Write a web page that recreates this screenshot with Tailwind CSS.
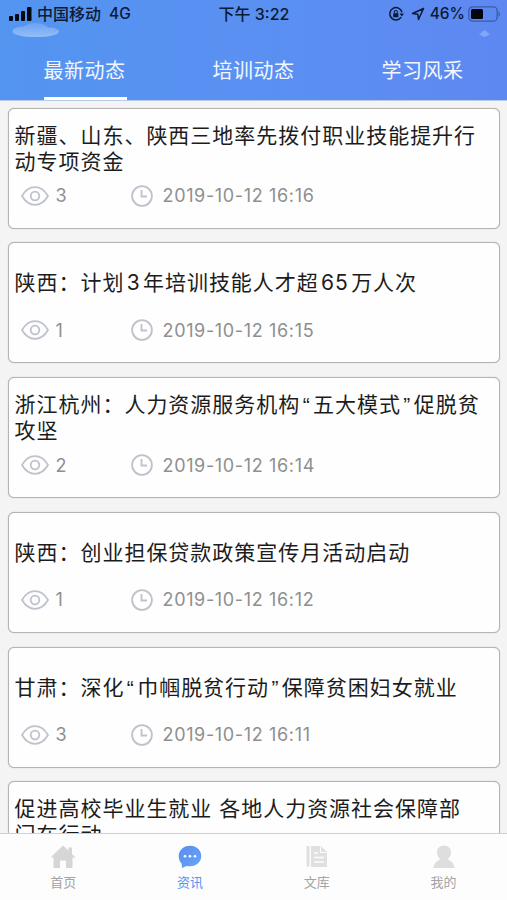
<!DOCTYPE html>
<html lang="zh-CN">
  <head>
    <meta charset="UTF-8" />
    <meta name="viewport" content="width=device-width, initial-scale=1" />
    <title>最新动态</title>
    <script src="https://cdn.jsdelivr.net/npm/@tailwindcss/browser@4"></script>
  </head>
  <body
    class="h-[900px] w-[507px] flex flex-col overflow-hidden bg-[#f4f4f4] font-['Inter','Noto_Sans_CJK_SC',sans-serif]"
  >
    <header
      class="relative h-[100px] shrink-0 flex flex-col bg-linear-to-r from-[#5395f0] via-[#5a90f2] to-[#5e88f1]"
    >
      <!-- Clouds -->
      <svg class="absolute left-3 top-[22px]" width="48" height="16" viewBox="0 0 48 16">
        <defs>
          <linearGradient id="cloud" x1="0" y1="0" x2="0" y2="1">
            <stop offset="0" stop-color="#6ca2f4" />
            <stop offset="1" stop-color="#94bdf7" />
          </linearGradient>
        </defs>
        <path d="M12 4.500C15 1.500 22 0 27 1.500c4 .5 7 2 9 4 6 0 11 1.500 11 4 0 3.500-10 5.500-23 5.500S.5 13 .5 9.500C.5 6.500 5 4.500 12 4.500Z" fill="url(#cloud)" />
      </svg>
      <svg class="absolute left-[478px] top-[30px]" width="13" height="8" viewBox="0 0 13 8">
        <path d="M0 4c2 0 3-1 4-2 1-2 4-2 5 0 1 1 2 2 4 2-2 0-3 2-6.500 3C3 6 2 4 0 4Z" fill="#80a8f7" />
      </svg>

      <!-- Status bar -->
      <div class="relative h-7 grid grid-cols-3 items-center pl-[9px] pr-[6px] text-[#0c1a35] text-[16px] leading-7">
        <div class="flex items-center whitespace-nowrap">
          <svg class="mr-[5px]" width="23" height="14" viewBox="0 0 23 14" fill="#030912">
            <rect x="0" y="9" width="4" height="5" rx="1" />
            <rect x="6" y="7" width="4" height="7" rx="1" />
            <rect x="12" y="4" width="4" height="10" rx="1" />
            <rect x="18" y="0" width="4.500" height="14" rx="1" />
          </svg>
          <span class="font-medium">中国移动</span>
          <span class="ml-[8px] font-medium text-[15.500px]">4G</span>
        </div>
        <div class="pr-[2px] text-center font-medium whitespace-nowrap">下午 3:22</div>
        <div class="flex items-center justify-end">
          <svg class="mr-[7px]" width="16" height="16" viewBox="0 0 16 16" fill="none" stroke="#0c1a35" stroke-width="1.500">
            <path d="M13.200 11.200A6.200 6.200 0 1 1 14 6.200" />
            <path d="M11.600 7.600h4.400l-2.200 3Z" fill="#0c1a35" stroke="none" />
            <rect x="5.200" y="7.300" width="5.200" height="4" rx=".6" fill="#0c1a35" stroke="none" />
            <path d="M6.300 7.500V6a1.500 1.500 0 0 1 3 0v1.500" stroke-width="1.100" />
          </svg>
          <svg class="mr-[5px]" width="14" height="14" viewBox="0 0 14 14" fill="none" stroke="#0c1a35" stroke-width="1.500" stroke-linejoin="round">
            <path d="M12.500 1.500 1.500 6.500l5.300.7.700 5.300Z" />
          </svg>
          <span class="mr-[3px] font-medium text-[15.500px]">46%</span>
          <svg width="33" height="16" viewBox="0 0 33 16">
            <rect x=".8" y=".8" width="28.400" height="14.400" rx="4" fill="none" stroke="#3a5ca3" stroke-width="1.300" />
            <rect x="3" y="3" width="12" height="10" rx="1.500" fill="#02060c" />
            <path d="M30.500 5.500c2 1 2 4 0 5Z" fill="#3a5ca3" />
          </svg>
        </div>
      </div>

      <!-- Top tabs -->
      <nav class="flex-1 grid grid-cols-3 text-center text-[20px] tracking-[0.500px] text-[#f2f7ff]">
        <a class="flex flex-col items-center">
          <span class="h-[69px] leading-[86px]">最新动态</span>
          <span class="ml-[2px] h-[3px] w-[83px] bg-white"></span>
        </a>
        <a class="leading-[86px]">培训动态</a>
        <a class="leading-[86px]">学习风采</a>
      </nav>
    </header>

    <!-- News list -->
    <main id="newsList" class="flex-1 min-h-0 overflow-hidden flex flex-col gap-[13.800px] border-t border-[#b9c9ea] pt-[6.500px] px-[7.500px]"></main>

    <!-- Bottom tabs -->
    <footer class="h-[67px] shrink-0 grid grid-cols-4 border-t border-[#cfcfcf] bg-[#fdfdfd] text-[13px] text-[#a3a3a3]">
      <a class="flex flex-col items-center pt-[11px]">
        <svg width="26" height="24" viewBox="0 0 26 24" fill="#d6d6d6">
          <path d="M13 .5 18.500 5.500V2.500h3.500v6.500l3.500 3.500H22.500V22a1 1 0 0 1-1 1H16v-6.500a1 1 0 0 0-1-1h-4a1 1 0 0 0-1 1V23H4.500a1 1 0 0 1-1-1v-9.500H.5Z" />
        </svg>
        <span class="mt-[3px] leading-[20px]">首页</span>
      </a>
      <a class="flex flex-col items-center pt-[11px] text-[#5793ef]">
        <svg width="26" height="24" viewBox="0 0 26 24">
          <defs>
            <linearGradient id="bubble" x1="0" y1="0" x2="1" y2="1">
              <stop offset="0" stop-color="#5c8cf0" />
              <stop offset="1" stop-color="#66a6f6" />
            </linearGradient>
          </defs>
          <path d="M13 .7c6.500 0 11.300 4.500 11.300 10.300S19.500 21.300 13 21.300c-1.200 0-2.400-.1-3.500-.4L5 23l-.3-4.200C2.800 16.900 1.700 14.100 1.700 11 1.700 5.200 6.500.7 13 .7Z" fill="url(#bubble)" />
          <g fill="#fff">
            <circle cx="8" cy="11.300" r="1.300" />
            <circle cx="13" cy="11.300" r="1.300" />
            <circle cx="18" cy="11.300" r="1.300" />
          </g>
        </svg>
        <span class="mt-[3px] leading-[20px]">资讯</span>
      </a>
      <a class="flex flex-col items-center pt-[11px]">
        <svg width="26" height="24" viewBox="0 0 26 24">
          <rect x="2.500" y="1" width="3" height="20.500" fill="#e0e0e0" />
          <path d="M7 1h10l6 6v15H7Z" fill="#e0e0e0" />
          <path d="M16.500 1.500V7.500H22.500" fill="none" stroke="#fdfdfd" stroke-width="1.200" />
          <path d="M10 8h4M10 12.500h10M10 17h10" stroke="#fdfdfd" stroke-width="1.300" />
        </svg>
        <span class="mt-[3px] leading-[20px]">文库</span>
      </a>
      <a class="flex flex-col items-center pt-[11px]">
        <svg width="26" height="24" viewBox="0 0 26 24" fill="#dedede">
          <path d="M13 .5c4 0 7 2.800 7 6.700 0 3.300-1.400 5.600-3.400 7 3.800 1.600 6.500 4.400 6.900 8.800h-21c.4-4.400 3.100-7.200 6.900-8.800C7.400 12.800 6 10.500 6 7.200 6 3.300 9 .5 13 .5Z" />
        </svg>
        <span class="mt-[3px] leading-[20px]">我的</span>
      </a>
    </footer>

    <script>
      const news = [
        { title: "新疆、山东、陕西三地率先拨付职业技能提升行动专项资金", views: 3, time: "2019-10-12 16:16" },
        { title: "陕西：计划3年培训技能人才超65万人次", views: 1, time: "2019-10-12 16:15" },
        { title: "浙江杭州：人力资源服务机构“五大模式”促脱贫攻坚", views: 2, time: "2019-10-12 16:14" },
        { title: "陕西：创业担保贷款政策宣传月活动启动", views: 1, time: "2019-10-12 16:12" },
        { title: "甘肃：深化“巾帼脱贫行动”保障贫困妇女就业", views: 3, time: "2019-10-12 16:11" },
        { title: "促进高校毕业生就业 各地人力资源社会保障部门在行动", views: 2, time: "2019-10-12 16:10" },
      ];

      // extra room around digits and quotes between Chinese characters
      function spaceTitle(title) {
        return title
          .replace(/\d+/g, (s) => `<span class="mx-[2.300px]">${s}</span>`)
          .replace(/[“”]/g, (s) => `<span class="mx-[2.400px] font-['Liberation_Sans',sans-serif]">${s}</span>`);
      }

      document.getElementById("newsList").innerHTML = news
        .map(
          (item) => `
          <article class="h-[121px] shrink-0 rounded-[6px] border border-[#b4b4b4] shadow-[0_0_1px_#a8a8a8] bg-[#fefefe] pt-[14px] pl-[6px] pr-[17px]">
            <div class="h-[52px] flex items-center">
              <h2 class="text-[21px] leading-[26px] tracking-[0.980px] text-[#1c1c1c] break-all">${spaceTitle(item.title)}</h2>
            </div>
            <div class="mt-[8px] h-[26px] flex items-center text-[18px] text-[#8f8f8f]">
              <svg class="ml-[6px]" width="28" height="20" viewBox="0 0 28 20" fill="none" stroke="#bfc2cc" stroke-width="1.800">
                <path d="M1 10C4.500 4 9 1.200 14 1.200S23.500 4 27 10c-3.500 6-8 8.800-13 8.800S4.500 16 1 10Z" stroke-linejoin="round" />
                <circle cx="14" cy="10" r="4.300" />
              </svg>
              <span class="ml-[7px] w-[75px]">${item.views}</span>
              <svg width="22" height="22" viewBox="0 0 22 22" fill="none" stroke="#bfc2cc" stroke-width="1.800">
                <circle cx="11" cy="11" r="9.900" />
                <path d="M10.500 5v6.500H16" />
              </svg>
              <span class="ml-[10px] tracking-[0.650px]">${item.time}</span>
            </div>
          </article>`
        )
        .join("");
    </script>
  </body>
</html>
